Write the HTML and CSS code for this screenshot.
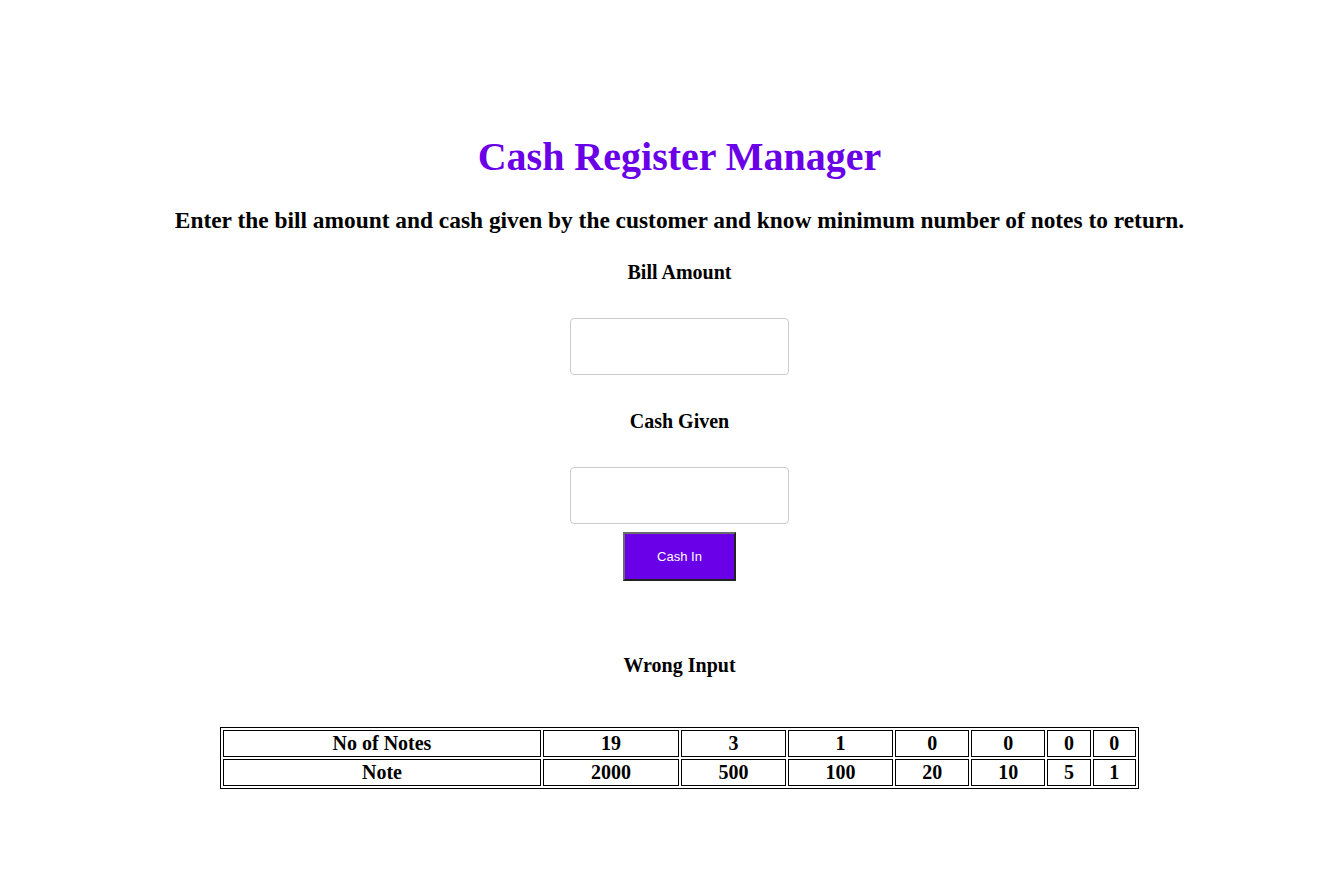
FILE: index.html
```html
<!DOCTYPE html>
<html>
<head>
<meta charset="utf-8">
<title>Cash Register Manager</title>
<link rel="stylesheet" href="styles.css">
</head>
<body>
<main class="app">
  <h1 class="title">Cash Register Manager</h1>
  <h2 class="subtitle">Enter the bill amount and cash given by the customer and know minimum number of notes to return.</h2>
  <label class="field-label" for="bill">Bill Amount</label>
  <input class="field" id="bill" type="number">
  <label class="field-label field-label-next" for="cash">Cash Given</label>
  <input class="field" id="cash" type="number">
  <button class="btn">Cash In</button>
  <p class="message">Wrong Input</p>
  <table class="notes">
    <tr>
      <th class="head">No of Notes</th>
      <td>19</td><td>3</td><td>1</td><td>0</td><td>0</td><td>0</td><td>0</td>
    </tr>
    <tr>
      <th class="head">Note</th>
      <td>2000</td><td>500</td><td>100</td><td>20</td><td>10</td><td>5</td><td>1</td>
    </tr>
  </table>
</main>
</body>
</html>
```

FILE: styles.css
```css
body {
  margin: 8px;
  font-family: "Liberation Serif", "Times New Roman", serif;
  color: #000;
  background: #fff;
}

.app {
  padding-left: 40px;
  text-align: center;
}

.title {
  color: #6a00e8;
  font-size: 40px;
  line-height: 46px;
  margin: 126px 0 0;
}

.subtitle {
  font-size: 23.4px;
  line-height: 28px;
  margin: 26px 0 0;
}

.field-label {
  display: block;
  font-weight: bold;
  font-size: 20px;
  line-height: 24px;
  margin-top: 26px;
}

.field-label-next {
  margin-top: 34px;
}

.field {
  display: block;
  box-sizing: border-box;
  width: 219px;
  height: 57px;
  margin: 34px auto 0;
  border: 1px solid #ccc;
  border-radius: 4px;
  padding: 0 8px;
}

.btn {
  display: block;
  margin: 8px auto 0;
  width: 113px;
  height: 49px;
  background: #6a00e8;
  color: #fff;
  font-family: "Liberation Sans", Arial, sans-serif;
  font-size: 13px;
  border-width: 2px;
  border-style: solid;
  border-color: #6b6b6b #222 #222 #6b6b6b;
}

.message {
  font-weight: bold;
  font-size: 20px;
  line-height: 24px;
  margin: 72px 0 0;
}

.notes {
  width: 919px;
  margin: 50px auto 0;
  border: 1px solid #000;
  border-spacing: 2px;
  font-size: 20px;
  font-weight: bold;
}

.notes th,
.notes td {
  border: 1px solid #000;
  padding: 1px;
  line-height: 23px;
  text-align: center;
}
```
